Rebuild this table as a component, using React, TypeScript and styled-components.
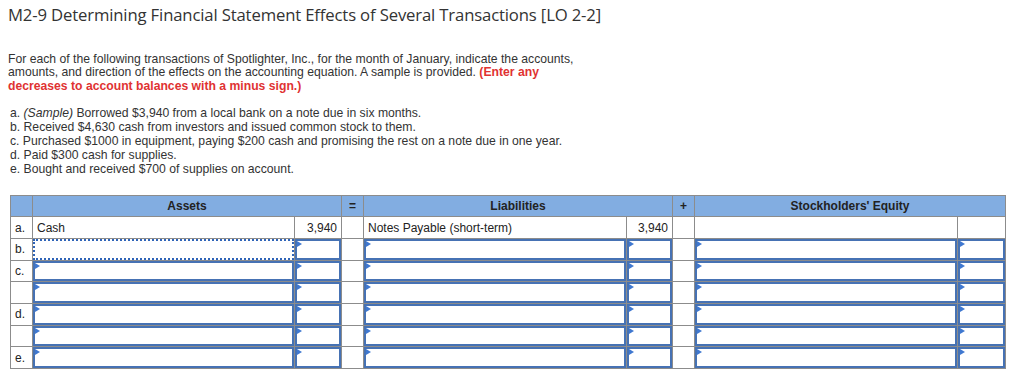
import styled, { createGlobalStyle } from "styled-components";

const GlobalStyle = createGlobalStyle`
  body {
    margin: 0;
    background: #fff;
    font-family: "Liberation Sans", Arial, sans-serif;
    color: #333;
  }
`;

const Page = styled.div`
  padding: 4px 8px 0 8px;
`;

const Title = styled.h1`
  margin: 0;
  font-family: "Open Sans", "Liberation Sans", sans-serif;
  font-weight: 400;
  font-size: 16.7px;
  line-height: 22px;
  letter-spacing: -0.15px;
  color: #333;
`;

const Intro = styled.p`
  margin: 27px 0 0 0;
  font-size: 12.2px;
  line-height: 13.4px;
  width: 580px;
`;

const Warn = styled.strong`
  color: #e03232;
`;

const Steps = styled.div`
  margin: 13px 0 0 2px;
  font-size: 12.2px;
  line-height: 14px;
`;

const Grid = styled.table`
  margin: 19px 0 0 2px;
  border-collapse: collapse;
  table-layout: fixed;
  font-size: 12px;
  border: 1px solid #8c8c8c;
`;

const HeadCell = styled.th`
  background: #82ade1;
  border: 1px solid #8c8c8c;
  height: 20px;
  padding: 0;
  font-weight: 700;
  font-size: 12px;
  color: #222;
`;

const Cell = styled.td<{ $right?: boolean }>`
  border: 1px solid #8c8c8c;
  height: 20.7px;
  padding: 0 4px;
  text-align: ${(p) => (p.$right ? "right" : "left")};
  color: #222;
`;

const InputCell = styled.td`
  border: 1px solid #8c8c8c;
  height: 20.7px;
  padding: 0;
`;

const Field = styled.div<{ $focus?: boolean }>`
  position: relative;
  height: 16.7px;
  border: 2px ${(p) => (p.$focus ? "dotted #2f64b8" : "solid #4672b4")};
  background: #fff;
  &::before {
    content: "";
    position: absolute;
    left: 0;
    top: 0;
    border-left: 5px solid #3f78d0;
    border-top: 3px solid transparent;
    border-bottom: 3px solid transparent;
    display: ${(p) => (p.$focus ? "none" : "block")};
  }
`;

const cols = [22, 262, 47, 22, 263, 46, 22, 263, 48];

const rows = ["b.", "c.", "", "d.", "", "e."];

export default function App() {
  return (
    <>
      <GlobalStyle />
      <Page>
        <Title>M2-9 Determining Financial Statement Effects of Several Transactions [LO 2-2]</Title>
        <Intro>
          For each of the following transactions of Spotlighter, Inc., for the month of January, indicate the accounts,
          amounts, and direction of the effects on the accounting equation. A sample is provided.{" "}
          <Warn>(Enter any decreases to account balances with a minus sign.)</Warn>
        </Intro>
        <Steps>
          <div>
            a. <i>(Sample)</i> Borrowed $3,940 from a local bank on a note due in six months.
          </div>
          <div>b. Received $4,630 cash from investors and issued common stock to them.</div>
          <div>c. Purchased $1000 in equipment, paying $200 cash and promising the rest on a note due in one year.</div>
          <div>d. Paid $300 cash for supplies.</div>
          <div>e. Bought and received $700 of supplies on account.</div>
        </Steps>
        <Grid>
          <colgroup>
            {cols.map((w, i) => (
              <col key={i} style={{ width: w }} />
            ))}
          </colgroup>
          <thead>
            <tr>
              <HeadCell />
              <HeadCell colSpan={2}>Assets</HeadCell>
              <HeadCell>=</HeadCell>
              <HeadCell colSpan={2}>Liabilities</HeadCell>
              <HeadCell>+</HeadCell>
              <HeadCell colSpan={2}>Stockholders' Equity</HeadCell>
            </tr>
          </thead>
          <tbody>
            <tr>
              <Cell>a.</Cell>
              <Cell>Cash</Cell>
              <Cell $right>3,940</Cell>
              <Cell />
              <Cell>Notes Payable (short-term)</Cell>
              <Cell $right>3,940</Cell>
              <Cell />
              <Cell />
              <Cell />
            </tr>
            {rows.map((label, r) => (
              <tr key={r}>
                <Cell>{label}</Cell>
                <InputCell>
                  <Field $focus={r === 0} />
                </InputCell>
                <InputCell>
                  <Field />
                </InputCell>
                <Cell />
                <InputCell>
                  <Field />
                </InputCell>
                <InputCell>
                  <Field />
                </InputCell>
                <Cell />
                <InputCell>
                  <Field />
                </InputCell>
                <InputCell>
                  <Field />
                </InputCell>
              </tr>
            ))}
          </tbody>
        </Grid>
      </Page>
    </>
  );
}
